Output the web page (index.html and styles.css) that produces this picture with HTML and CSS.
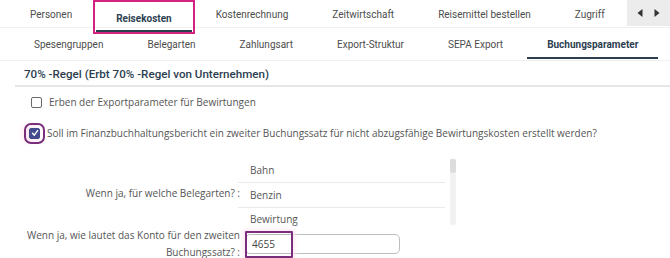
FILE: index.html
```html
<!DOCTYPE html>
<html lang="de">
<head>
<meta charset="utf-8">
<link rel="stylesheet" href="styles.css">
</head>
<body>
<div class="page">
  <nav class="tabs main-tabs">
    <div class="tab">Personen</div>
    <div class="tab active marked">Reisekosten</div>
    <div class="tab">Kostenrechnung</div>
    <div class="tab">Zeitwirtschaft</div>
    <div class="tab">Reisemittel bestellen</div>
    <div class="tab">Zugriff</div>
    <div class="arrows">
      <svg width="8" height="10" viewBox="0 0 8 10"><polygon points="6.5,1 6.5,9 1.5,5" fill="#333"/></svg>
      <svg width="8" height="10" viewBox="0 0 8 10"><polygon points="1.5,1 1.5,9 6.5,5" fill="#333"/></svg>
    </div>
  </nav>
  <nav class="tabs sub-tabs">
    <div class="tab">Spesengruppen</div>
    <div class="tab">Belegarten</div>
    <div class="tab">Zahlungsart</div>
    <div class="tab">Export-Struktur</div>
    <div class="tab">SEPA Export</div>
    <div class="tab active">Buchungsparameter</div>
  </nav>
  <section class="section">
    <h2 class="section-title">70% -Regel (Erbt 70% -Regel von Unternehmen)</h2>
    <label class="check-row">
      <span class="box"></span>
      <span>Erben der Exportparameter für Bewirtungen</span>
    </label>
    <label class="check-row second">
      <span class="box checked marked2">
        <svg width="8" height="8" viewBox="0 0 8 8"><path d="M1.5 4.3 L3.3 6.2 L6.6 1.6" fill="none" stroke="#fff" stroke-width="1.4" stroke-linecap="round" stroke-linejoin="round"/></svg>
      </span>
      <span>Soll im Finanzbuchhaltungsbericht ein zweiter Buchungssatz für nicht abzugsfähige Bewirtungskosten erstellt werden?</span>
    </label>
    <div class="form-row list-row">
      <div class="label">Wenn ja, für welche Belegarten? :</div>
      <div class="listbox">
        <ul class="list">
          <li>Bahn</li>
          <li>Benzin</li>
          <li>Bewirtung</li>
        </ul>
        <div class="scrollbar"><div class="thumb"></div></div>
      </div>
    </div>
    <div class="form-row input-row">
      <div class="label">Wenn ja, wie lautet das Konto für den zweiten<br>Buchungssatz? :</div>
      <div class="input-wrap">
        <div class="input"><span class="value">4655</span></div>
      </div>
    </div>
  </section>
</div>
</body>
</html>
```
FILE: styles.css
```css
* { box-sizing: border-box; }
html, body { margin: 0; padding: 0; background: #fff; }
body { width: 670px; height: 258px; overflow: hidden; font-family: "Open Sans", sans-serif; color: #555; }
.page { width: 670px; }

.tabs { display: flex; align-items: stretch; font-family: Roboto, sans-serif; font-size: 10px; color: #4d4d4d; }
.main-tabs { height: 28px; padding-left: 8px; border-bottom: 1px solid #f0f0f0; }
.sub-tabs { height: 33px; padding-left: 12px; border-bottom: 1px solid #f0f0f0; }
.tab { display: flex; align-items: center; padding: 0 22px; position: relative; white-space: nowrap; }
.tab.active { font-weight: bold; color: #2c3e50; }
.tab.active::after { content: ""; position: absolute; left: 2px; right: 2px; bottom: 1px; height: 2px; background: #2c3e50; }
.main-tabs .tab { padding-top: 2px; }
.marked { outline: 2px solid #d4237f; outline-offset: -1px; height: 32px; margin-top: 1px; }
.arrows { margin-left: auto; width: 43px; height: 26px; background: #ececec; display: flex; align-items: center; justify-content: space-around; padding: 0 4px; flex: none; }

.section { padding-left: 15px; }
.section-title { margin: 0; font-family: Roboto, sans-serif; font-weight: 500; font-size: 11.6px; color: #2c3e50; padding: 6px 0 4px 9px; border-bottom: 2px solid #e6e6e6; }
.check-row { display: flex; align-items: center; gap: 7px; font-size: 10px; color: #555; padding-left: 16px; height: 14px; margin-top: 8px; }
.check-row.second { margin-top: 17px; padding-left: 14px; }
.box { width: 11px; height: 11px; border: 1.5px solid #6b6b6b; border-radius: 2px; flex: none; display: flex; align-items: center; justify-content: center; }
.box.checked { background: #434b8c; border-color: #434b8c; }
.marked2 { outline: 2px solid #7a2d7a; outline-offset: 3px; box-shadow: -4px 0 6px 3px #fde8f3; }

.form-row { display: flex; }
.label { width: 225px; flex: none; text-align: right; font-size: 10px; color: #555; line-height: 17px; white-space: nowrap; }
.list-row { margin-top: 18px; align-items: center; }
.listbox { display: flex; }
.list { list-style: none; margin: 0 0 0 -2px; padding: 0; width: 207px; }
.list li { height: 25px; line-height: 24px; padding-left: 12px; font-size: 10px; color: #555; border-bottom: 1px solid #eaeaea; }
.list li:last-child { border-bottom: none; height: 21px; line-height: 22px; }
.scrollbar { width: 6px; margin-left: 5px; margin-top: 1px; height: 66px; background: #f2f2f2; border-radius: 2px; }
.thumb { height: 14px; background: #dcdcdc; border-radius: 2px; }

.input-row { align-items: flex-start; margin-top: -2px; }
.input-wrap { padding-top: 7px; padding-left: 5px; }
.input { width: 155px; height: 20px; border: 1px solid #bdbdbd; border-radius: 5px; display: flex; align-items: center; padding-left: 6px; font-size: 10px; color: #444; }
.input .value { display: inline-block; flex: none; width: 48px; height: 27px; line-height: 27px; margin-left: -7px; padding-left: 7px; box-shadow: inset 0 0 0 2px #7a2d7a, 0 0 4px 2px #fde8f3; border-radius: 1px; }
```
